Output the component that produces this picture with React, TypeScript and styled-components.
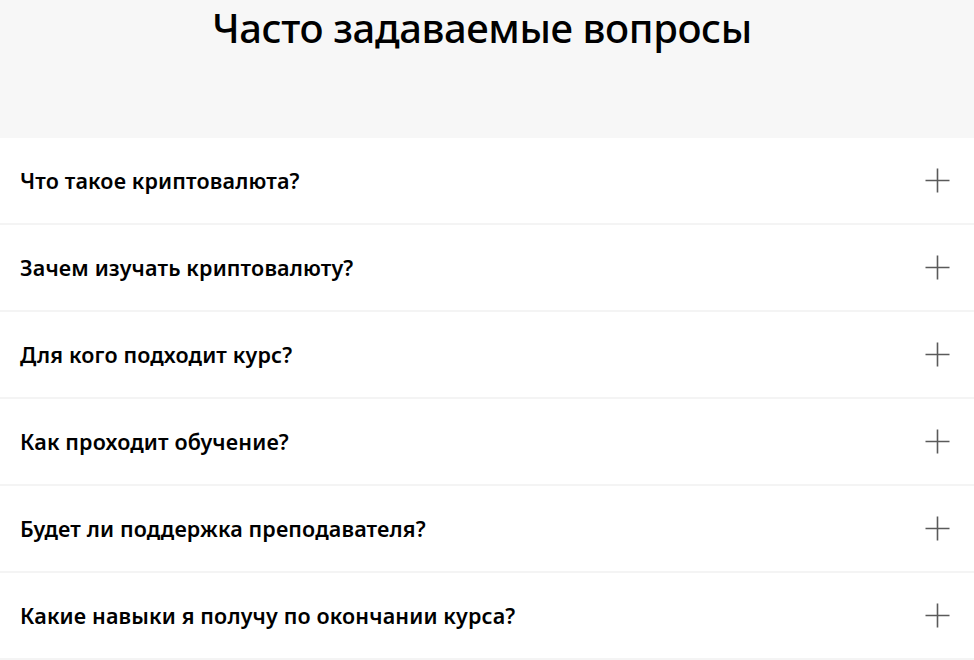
import React from "react";
import styled, { createGlobalStyle } from "styled-components";

const GlobalStyle = createGlobalStyle`
  html, body {
    margin: 0;
    padding: 0;
    background: #ffffff;
  }
  body {
    font-family: "Noto Sans", "Liberation Sans", sans-serif;
    color: #000;
  }
  * { box-sizing: border-box; }
`;

const Page = styled.div`
  width: 974px;
  height: 660px;
  overflow: hidden;
  display: flex;
  flex-direction: column;
  background: #f4f4f4;
`;

const Header = styled.header`
  height: 138px;
  flex: none;
  background: #f7f7f7;
  display: flex;
  justify-content: center;
  padding-top: 0;
  padding-right: 10px;
`;

const Title = styled.h1`
  margin: 0;
  font-family: "Noto Sans", "Liberation Sans", sans-serif;
  font-weight: 500;
  font-size: 40px;
  line-height: 56px;
  letter-spacing: -0.4px;
  color: #000;
`;

const List = styled.div`
  display: flex;
  flex-direction: column;
  gap: 2px;
`;

const Row = styled.div`
  height: 85px;
  flex: none;
  background: #ffffff;
  display: flex;
  align-items: center;
  justify-content: space-between;
  padding: 0 24px 0 20px;
`;

const Question = styled.span`
  font-family: "Noto Sans", "Liberation Sans", sans-serif;
  font-weight: 600;
  font-size: 21.5px;
  line-height: 28px;
  letter-spacing: 0.15px;
  color: #000;
`;

const PlusIcon = () => (
  <svg width="25" height="25" viewBox="0 0 25 25" fill="none">
    <path d="M12.5 0.5V24.5M0.5 12.5H24.5" stroke="#5a5a5a" strokeWidth="1.6" />
  </svg>
);

const questions = [
  "Что такое криптовалюта?",
  "Зачем изучать криптовалюту?",
  "Для кого подходит курс?",
  "Как проходит обучение?",
  "Будет ли поддержка преподавателя?",
  "Какие навыки я получу по окончании курса?",
];

export default function App() {
  return (
    <>
      <GlobalStyle />
      <Page>
        <Header>
          <Title>Часто задаваемые вопросы</Title>
        </Header>
        <List>
          {questions.map((q) => (
            <Row key={q}>
              <Question>{q}</Question>
              <PlusIcon />
            </Row>
          ))}
        </List>
      </Page>
    </>
  );
}
